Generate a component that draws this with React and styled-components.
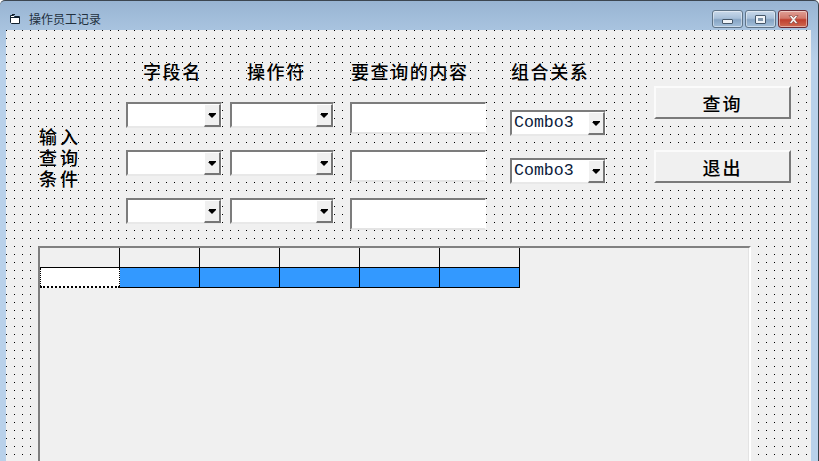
import React from 'react'
import styled, { createGlobalStyle } from 'styled-components'

const CJK = '"Noto Sans CJK SC", "Liberation Sans", sans-serif'

const GlobalStyle = createGlobalStyle`
  html, body {
    margin: 0;
    padding: 0;
    height: 100%;
    overflow: hidden;
    background: #fff;
  }
`

const Frame = styled.div`
  box-sizing: border-box;
  width: 819px;
  height: 461px;
  overflow: hidden;
  display: flex;
  flex-direction: column;
  padding: 0 7px 0 6px;
  border-top: 1px solid #3c4650;
  border-right: 1px solid #39424c;
  border-top-left-radius: 5px;
  border-top-right-radius: 5px;
  background: linear-gradient(180deg, #98b4d2 0px, #a8c3df 28px, #b9d1ea 60px, #b9d1ea 100%);
`

const TitleBar = styled.div`
  flex: none;
  height: 29px;
  display: flex;
  align-items: flex-start;
  justify-content: space-between;
`

const TitleGroup = styled.div`
  display: flex;
  align-items: center;
  gap: 8px;
  height: 18px;
  margin-top: 9px;
  padding-left: 3px;
`

const Title = styled.span`
  font: 400 12px/18px ${CJK};
  color: #22303e;
`

const CaptionButtons = styled.div`
  display: flex;
  gap: 2px;
  margin-top: 9px;
  padding-right: 3px;
`

const CaptionButton = styled.div`
  box-sizing: border-box;
  width: ${p => (p.$close ? 30 : 31)}px;
  height: 18px;
  display: flex;
  align-items: center;
  justify-content: center;
  border: 1px solid ${p => (p.$close ? '#6b2a34' : '#5f7488')};
  border-radius: 3px;
  box-shadow: inset 0 0 0 1px rgba(255, 255, 255, 0.45);
  background: ${p =>
    p.$close
      ? 'linear-gradient(180deg, #e0a096 0%, #d2796c 45%, #bf3f2e 55%, #cf6a52 100%)'
      : 'linear-gradient(180deg, #c9d9ea 0%, #a9c1da 45%, #87a5c4 55%, #a4c0db 100%)'};
`

const MinGlyph = styled.div`
  box-sizing: border-box;
  width: 11px;
  height: 5px;
  margin-top: 5px;
  border: 1px solid #46586a;
  border-radius: 1px;
  background: #f0f4f8;
`

const MaxGlyph = styled.div`
  box-sizing: border-box;
  width: 11px;
  height: 9px;
  border: 1px solid #46586a;
  border-radius: 1px;
  background: #f0f4f8;
  display: flex;
  align-items: center;
  justify-content: center;

  &::after {
    content: '';
    width: 5px;
    height: 3px;
    background: #7f95aa;
  }
`

const Client = styled.div`
  flex: 1;
  min-height: 0;
  overflow: hidden;
  display: flex;
  flex-direction: column;
  background-color: #f0f0f0;
  background-image: radial-gradient(circle at 0 0, #000 1px, transparent 1px);
  background-size: 8px 8px;
`

const Form = styled.div`
  flex: none;
  height: 216px;
  box-sizing: border-box;
  display: grid;
  grid-template-columns: 120px 104px 120px 160px 144px 137px;
  padding-top: 30px;
`

const Column = styled.div`
  display: flex;
  flex-direction: column;
  align-items: flex-start;
  gap: ${p => p.$gap || 0}px;
  padding-top: ${p => p.$top || 0}px;
`

const Heading = styled.div`
  height: 22px;
  margin-bottom: ${p => p.$after}px;
  padding-left: ${p => p.$indent}px;
  font: 500 18px/22px ${CJK};
  letter-spacing: 1.6px;
  color: #000;
  white-space: nowrap;
`

const PromptText = styled.div`
  width: 44px;
  margin-left: 33px;
  margin-top: 66px;
  font: 500 18px/21px ${CJK};
  letter-spacing: 3px;
  color: #000;
`

const ComboBox = styled.div`
  box-sizing: border-box;
  width: ${p => p.$width}px;
  height: 26px;
  display: flex;
  justify-content: space-between;
  border-top: 2px solid #7c7c7c;
  border-left: 2px solid #7c7c7c;
  border-right: 1px solid #fff;
  border-bottom: 2px solid #e8e8e8;
  background: #fff;
`

const ComboText = styled.span`
  padding-left: 2px;
  font: 400 16.6px/22px "Liberation Mono", monospace;
  color: #0a1a3a;
`

const ComboArrow = styled.div`
  box-sizing: border-box;
  width: 17px;
  height: 23px;
  display: flex;
  flex-direction: column;
  align-items: center;
  justify-content: center;
  border-top: 1px solid #fff;
  border-left: 1px solid #fff;
  border-right: 2px solid #757575;
  border-bottom: 2px solid #757575;
  background: #f0f0f0;

  &::before {
    content: '';
    width: 7px;
    height: 1px;
    background: #000;
  }

  &::after {
    content: '';
    width: 0;
    height: 0;
    border-left: 4px solid transparent;
    border-right: 4px solid transparent;
    border-top: 4px solid #000;
  }
`

const TextBox = styled.div`
  box-sizing: border-box;
  width: 136px;
  height: 32px;
  border-top: 2px solid #7c7c7c;
  border-left: 2px solid #7c7c7c;
  border-right: 1px solid #fff;
  border-bottom: 2px solid #e4e4e4;
  background: #fff;
`

const CommandButton = styled.div`
  box-sizing: border-box;
  width: 137px;
  height: 33px;
  display: flex;
  align-items: center;
  justify-content: center;
  border-top: 2px solid #fbfbfb;
  border-left: 2px solid #fbfbfb;
  border-right: 2px solid #7a7a7a;
  border-bottom: 2px solid #7a7a7a;
  background: #f0f0f0;
  font: 500 18px/22px ${CJK};
  letter-spacing: 2px;
  color: #000;
`

const Grid = styled.div`
  box-sizing: border-box;
  flex: none;
  width: 713px;
  height: 300px;
  margin-left: 32px;
  border-top: 2px solid #808080;
  border-left: 2px solid #808080;
  border-right: 2px solid #fff;
  background: #f0f0f0;
  box-shadow: inset -1px 0 0 #e3e3e3;
`

const GridRow = styled.div`
  display: flex;
`

const Cell = styled.div`
  box-sizing: border-box;
  width: 80px;
  height: ${p => p.$height}px;
  border-right: 1px solid #000;
  border-bottom: 1px solid #000;
  background: ${p => p.$bg || '#f0f0f0'};
`

const CurrentCell = styled(Cell)`
  border-left: 1px dotted #000;
  border-right: 1px dotted #000;
  border-bottom: 2px dotted #000;
  background: #fff;
`

const fieldRows = [0, 1, 2]
const gridCols = [0, 1, 2, 3, 4]

function WindowIcon() {
  return (
    <svg width="12" height="12" viewBox="0 0 12 12">
      <path d="M1.5 2.5h3l1 1h5v7h-8l-1-1z" fill="#fff" stroke="#10202e" strokeWidth="1" />
      <path d="M1.5 4.5h9" stroke="#10202e" strokeWidth="1" />
      <path d="M3 1.5h3" stroke="#10202e" strokeWidth="1" />
    </svg>
  )
}

function CloseIcon() {
  return (
    <svg width="13" height="11" viewBox="0 0 13 11">
      <path d="M2 1.5h2.5l2 2 2-2H11L8 5.5l3 4H8.5l-2-2.2-2 2.2H2l3-4z" fill="#f4f0ee" stroke="#7a3a34" strokeWidth="0.6" />
    </svg>
  )
}

function Combo({ width, text }) {
  return (
    <ComboBox $width={width}>
      <ComboText>{text}</ComboText>
      <ComboArrow />
    </ComboBox>
  )
}

export default function App() {
  return (
    <Frame>
      <GlobalStyle />
      <TitleBar>
        <TitleGroup>
          <WindowIcon />
          <Title>操作员工记录</Title>
        </TitleGroup>
        <CaptionButtons>
          <CaptionButton><MinGlyph /></CaptionButton>
          <CaptionButton><MaxGlyph /></CaptionButton>
          <CaptionButton $close><CloseIcon /></CaptionButton>
        </CaptionButtons>
      </TitleBar>
      <Client>
        <Form>
          <Column>
            <PromptText>输入查询条件</PromptText>
          </Column>
          <Column $gap={22}>
            <Heading $indent={17} $after={-2}>字段名</Heading>
            {fieldRows.map(i => <Combo key={i} width={96} />)}
          </Column>
          <Column $gap={22}>
            <Heading $indent={17} $after={-2}>操作符</Heading>
            {fieldRows.map(i => <Combo key={i} width={104} />)}
          </Column>
          <Column $gap={16}>
            <Heading $indent={1} $after={4}>要查询的内容</Heading>
            {fieldRows.map(i => <TextBox key={i} />)}
          </Column>
          <Column $gap={22}>
            <Heading $indent={1} $after={6}>组合关系</Heading>
            <Combo width={96} text="Combo3" />
            <Combo width={96} text="Combo3" />
          </Column>
          <Column $gap={31} $top={26}>
            <CommandButton>查询</CommandButton>
            <CommandButton>退出</CommandButton>
          </Column>
        </Form>
        <Grid>
          <GridRow>
            <Cell $height={20} />
            {gridCols.map(i => <Cell key={i} $height={20} />)}
          </GridRow>
          <GridRow>
            <CurrentCell $height={20} />
            {gridCols.map(i => <Cell key={i} $height={20} $bg="#3399ff" />)}
          </GridRow>
        </Grid>
      </Client>
    </Frame>
  )
}
